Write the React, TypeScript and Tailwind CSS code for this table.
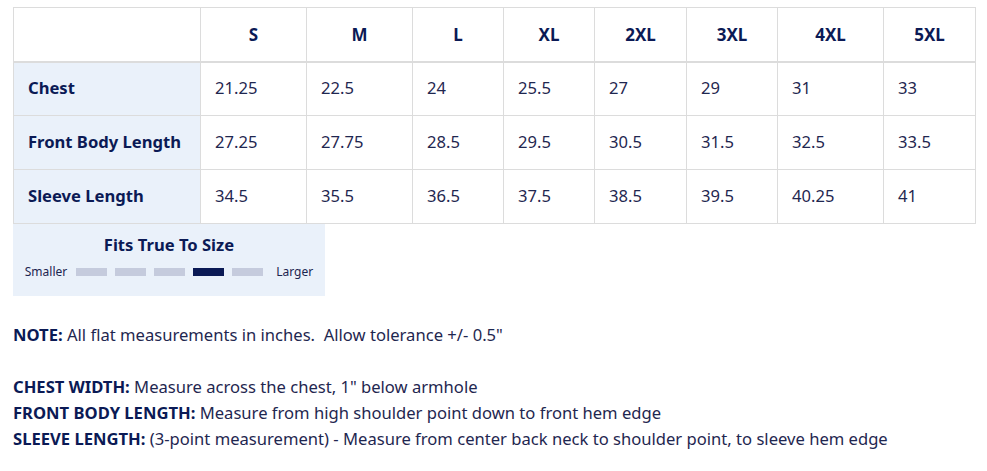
const sizes = ['S', 'M', 'L', 'XL', '2XL', '3XL', '4XL', '5XL'];
const colWidths = ['w-[187px]', 'w-[106px]', 'w-[106px]', 'w-[91px]', 'w-[91px]', 'w-[92px]', 'w-[91px]', 'w-[106px]', 'w-[92px]'];

const rows = [
  { label: 'Chest', values: ['21.25', '22.5', '24', '25.5', '27', '29', '31', '33'] },
  { label: 'Front Body Length', values: ['27.25', '27.75', '28.5', '29.5', '30.5', '31.5', '32.5', '33.5'] },
  { label: 'Sleeve Length', values: ['34.5', '35.5', '36.5', '37.5', '38.5', '39.5', '40.25', '41'] },
];

const notes = [
  { label: 'CHEST WIDTH:', text: 'Measure across the chest, 1" below armhole' },
  { label: 'FRONT BODY LENGTH:', text: 'Measure from high shoulder point down to front hem edge' },
  { label: 'SLEEVE LENGTH:', text: '(3-point measurement) - Measure from center back neck to shoulder point, to sleeve hem edge' },
];

function FitScale({ active }: { active: number }) {
  return (
    <div className="flex items-center text-[12px] text-[#1c2550]">
      <span>Smaller</span>
      <div className="flex gap-[8px] ml-[9px]">
        {[0, 1, 2, 3, 4].map(i => (
          <span
            key={i}
            className={i === active ? 'block w-[31px] h-[8px] bg-[#0b1a55]' : 'block w-[31px] h-[8px] bg-[#c5cbdd]'}
          />
        ))}
      </div>
      <span className="ml-[13px]">Larger</span>
    </div>
  );
}

export default function App() {
  return (
    <div className="bg-white min-h-[471px] pl-[13px] pt-[7px] text-[#1f2750] font-['Noto_Sans',sans-serif]">
      <table className="border-collapse table-fixed w-[962px] text-[16.6px]">
        <colgroup>
          {colWidths.map((w, i) => (
            <col key={i} className={w} />
          ))}
        </colgroup>
        <thead>
          <tr className="h-[54px] border-b-2 border-[#dcdcdc]">
            <th className="border border-[#dcdcdc] bg-white" />
            {sizes.map(s => (
              <th key={s} className="border border-[#dcdcdc] font-bold text-[#0b1a55] text-center text-[17px]">
                {s}
              </th>
            ))}
          </tr>
        </thead>
        <tbody>
          {rows.map(row => (
            <tr key={row.label} className="h-[54px]">
              <td className="border border-[#dcdcdc] bg-[#eaf1fa] px-[14px] font-bold text-[#0b1a55]">{row.label}</td>
              {row.values.map((v, i) => (
                <td key={i} className="border border-[#dcdcdc] px-[14px] text-[#1f2750]">
                  {v}
                </td>
              ))}
            </tr>
          ))}
        </tbody>
      </table>

      <div className="w-[312px] h-[72px] bg-[#eaf1fa] flex flex-col items-center pt-[10px] gap-[7px]">
        <div className="text-[16.6px] font-bold text-[#0b1a55] leading-[22px]">Fits True To Size</div>
        <FitScale active={3} />
      </div>

      <div className="mt-[26px] text-[16.6px] leading-[26px]">
        <p>
          <span className="font-bold text-[#0b1a55]">NOTE:</span> All flat measurements in inches.&nbsp; Allow tolerance +/- 0.5"
        </p>
        <div className="mt-[26px]">
          {notes.map(n => (
            <p key={n.label}>
              <span className="font-bold text-[#0b1a55]">{n.label}</span> {n.text}
            </p>
          ))}
        </div>
      </div>
    </div>
  );
}
